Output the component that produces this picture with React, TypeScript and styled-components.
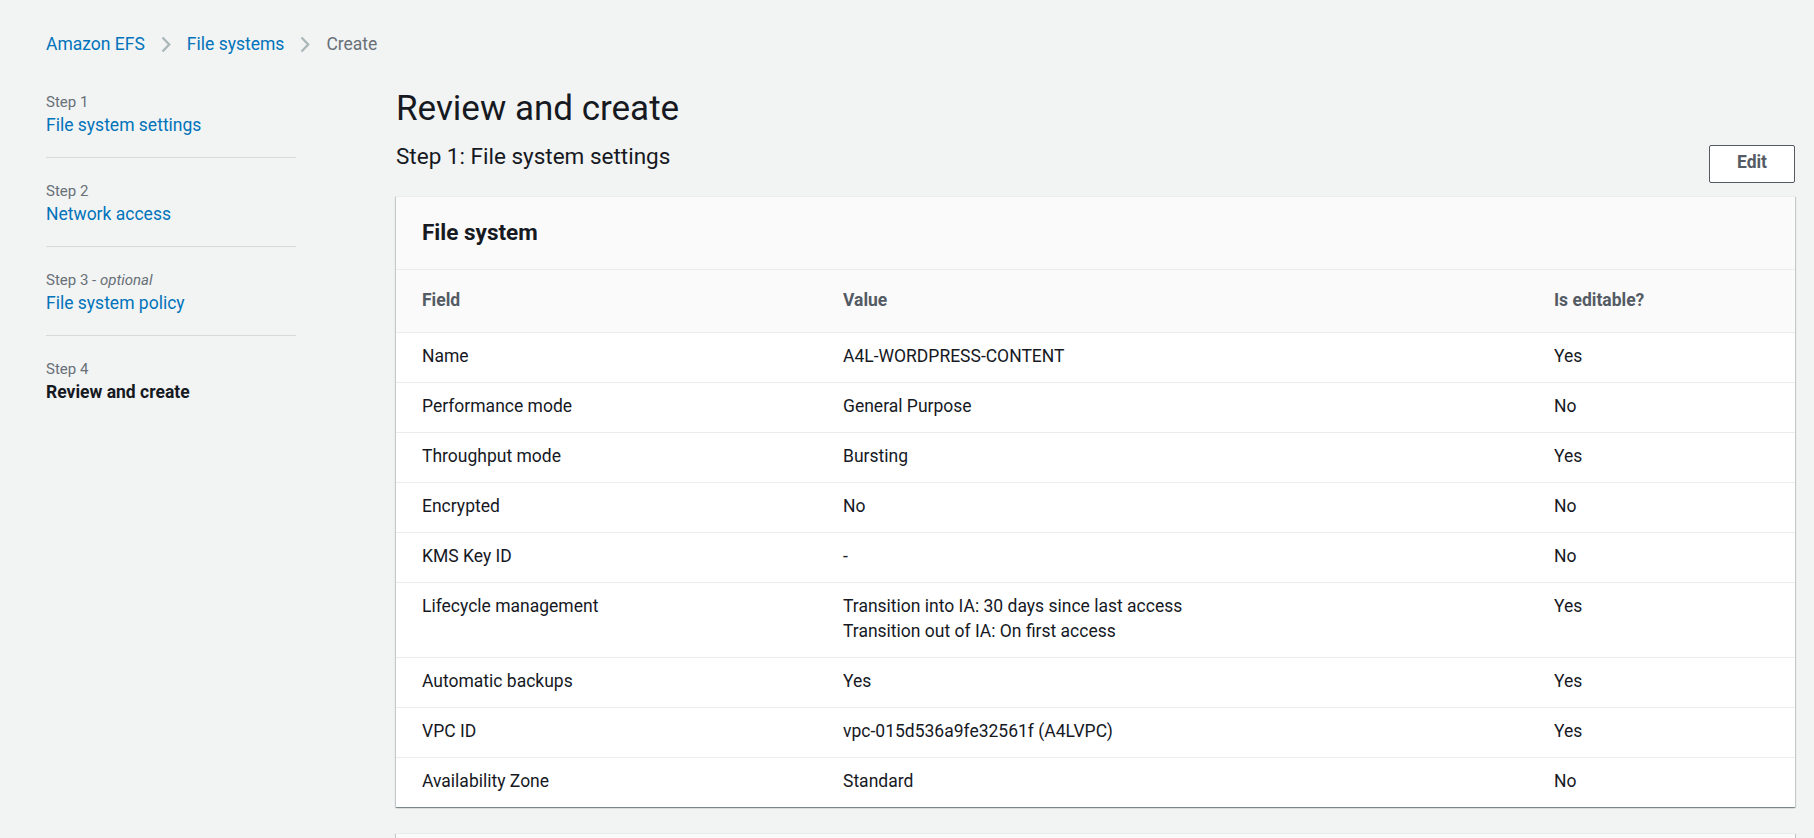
import styled, { createGlobalStyle } from 'styled-components'

const GlobalStyle = createGlobalStyle`
    *, *::before, *::after {
        box-sizing: border-box;
    }
    body {
        margin: 0;
        background: #f2f3f3;
        color: #16191f;
        font-family: Roboto, "Liberation Sans", Arial, sans-serif;
        font-size: 17.5px;
        line-height: 25px;
    }
`

const Page = styled.div`
    padding: 31.5px 19px 0 46px;
`

const Breadcrumbs = styled.nav`
    display: flex;
    align-items: center;
    gap: 16px;
    height: 25px;
`

const Crumb = styled.a<{ current?: boolean }>`
    color: ${({ current }) => current ? '#687078' : '#0073bb'};
    text-decoration: none;
    white-space: nowrap;
`

const Layout = styled.div`
    display: grid;
    grid-template-columns: 250px 1fr;
    column-gap: 100px;
    margin-top: 29px;
`

const Steps = styled.ul`
    list-style: none;
    margin: 0;
    padding: 5px 0 0;
`

const StepItem = styled.li`
    padding: 22px 0 19px;
    border-bottom: 1px solid #d5dbdb;
    &:first-child {
        padding-top: 0;
    }
    &:last-child {
        border-bottom: none;
    }
`

const StepLabel = styled.div`
    font-size: 15px;
    line-height: 22px;
    color: #687078;
    em {
        font-style: italic;
    }
`

const StepTitle = styled.div<{ active?: boolean }>`
    color: ${({ active }) => active ? '#16191f' : '#0073bb'};
    font-weight: ${({ active }) => active ? 700 : 400};
`

const Main = styled.main`
    min-width: 0;
`

const Title = styled.h1`
    margin: 0 0 10px;
    font-size: 35px;
    line-height: 45px;
    font-weight: 400;
`

const SectionHeader = styled.div`
    display: flex;
    justify-content: space-between;
    align-items: flex-start;
    margin-bottom: 13px;
`

const SectionTitle = styled.h2`
    margin: 0;
    font-size: 22.5px;
    line-height: 30px;
    font-weight: 400;
`

const Button = styled.button`
    margin-top: 4px;
    width: 86px;
    height: 38px;
    padding: 0 0 3px;
    background: #fff;
    border: 1px solid #545b64;
    border-radius: 2px;
    color: #545b64;
    font-family: inherit;
    font-size: 17.5px;
    font-weight: 700;
`

const Card = styled.section`
    background: #fff;
    border-top: 1px solid #eaeded;
    box-shadow: 0 1px 1px 0 rgba(0, 28, 36, 0.3), 1px 1px 1px 0 rgba(0, 28, 36, 0.15), -1px 1px 1px 0 rgba(0, 28, 36, 0.15);
    margin-bottom: 26px;
`

const CardHeader = styled.div`
    background: #fafafa;
    padding: 20px 26px 22px;
    border-bottom: 1px solid #eaeded;
`

const CardTitle = styled.h3`
    margin: 0;
    font-size: 22.5px;
    line-height: 30px;
    font-weight: 700;
`

const Table = styled.table`
    width: 100%;
    table-layout: fixed;
    border-collapse: collapse;
`

const HeadCell = styled.th<{ w?: number }>`
    position: relative;
    ${({ w }) => w ? `width: ${w}px;` : ''}
    padding: 18.5px 26px;
    background: #fafafa;
    border-bottom: 1px solid #eaeded;
    color: #545b64;
    font-weight: 700;
    text-align: left;
    & + &::before {
        content: "";
        position: absolute;
        left: 0;
        top: 15px;
        width: 1px;
        height: 30px;
        background: #eaeded;
    }
`

const Row = styled.tr`
    border-bottom: 1px solid #eaeded;
    &:last-child {
        border-bottom: none;
    }
`

const Cell = styled.td`
    padding: 11px 26px 13px;
    vertical-align: top;
`

const Chevron = () => (
    <svg width="10" height="17" viewBox="0 0 10 17" aria-hidden="true">
        <polyline points="1.5,1.5 8.2,8.5 1.5,15.5" fill="none" stroke="#aab7b8" strokeWidth="2.3" />
    </svg>
)

const steps = [
    { label: 'Step 1', title: 'File system settings' },
    { label: 'Step 2', title: 'Network access' },
    { label: 'Step 3', optional: true, title: 'File system policy' },
    { label: 'Step 4', title: 'Review and create', active: true },
]

const rows: [string, string[], string][] = [
    ['Name', ['A4L-WORDPRESS-CONTENT'], 'Yes'],
    ['Performance mode', ['General Purpose'], 'No'],
    ['Throughput mode', ['Bursting'], 'Yes'],
    ['Encrypted', ['No'], 'No'],
    ['KMS Key ID', ['-'], 'No'],
    ['Lifecycle management', ['Transition into IA: 30 days since last access', 'Transition out of IA: On first access'], 'Yes'],
    ['Automatic backups', ['Yes'], 'Yes'],
    ['VPC ID', ['vpc-015d536a9fe32561f (A4LVPC)'], 'Yes'],
    ['Availability Zone', ['Standard'], 'No'],
]

export default function App() {
    return (
        <>
            <GlobalStyle />
            <Page>
                <Breadcrumbs>
                    <Crumb href="#">Amazon EFS</Crumb>
                    <Chevron />
                    <Crumb href="#">File systems</Crumb>
                    <Chevron />
                    <Crumb current>Create</Crumb>
                </Breadcrumbs>
                <Layout>
                    <Steps>
                        {steps.map(s => (
                            <StepItem key={s.label}>
                                <StepLabel>
                                    {s.label}{s.optional && <> - <em>optional</em></>}
                                </StepLabel>
                                <StepTitle active={s.active}>{s.title}</StepTitle>
                            </StepItem>
                        ))}
                    </Steps>
                    <Main>
                        <Title>Review and create</Title>
                        <SectionHeader>
                            <SectionTitle>Step 1: File system settings</SectionTitle>
                            <Button>Edit</Button>
                        </SectionHeader>
                        <Card>
                            <CardHeader>
                                <CardTitle>File system</CardTitle>
                            </CardHeader>
                            <Table>
                                <thead>
                                    <tr>
                                        <HeadCell w={421}>Field</HeadCell>
                                        <HeadCell w={711}>Value</HeadCell>
                                        <HeadCell>Is editable?</HeadCell>
                                    </tr>
                                </thead>
                                <tbody>
                                    {rows.map(([field, value, editable]) => (
                                        <Row key={field}>
                                            <Cell>{field}</Cell>
                                            <Cell>{value.map(v => <div key={v}>{v}</div>)}</Cell>
                                            <Cell>{editable}</Cell>
                                        </Row>
                                    ))}
                                </tbody>
                            </Table>
                        </Card>
                        <Card>
                            <CardHeader>
                                <CardTitle>Tags</CardTitle>
                            </CardHeader>
                        </Card>
                    </Main>
                </Layout>
            </Page>
        </>
    )
}
